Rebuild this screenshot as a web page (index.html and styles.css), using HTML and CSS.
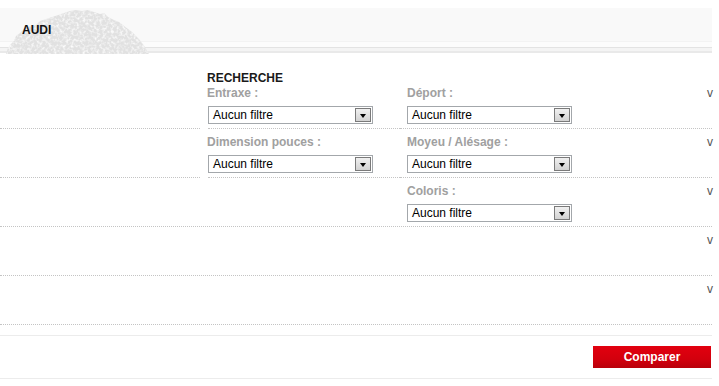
FILE: index.html
```html
<!DOCTYPE html>
<html lang="fr">
<head>
<meta charset="utf-8">
<title>AUDI</title>
<link rel="stylesheet" href="styles.css">
</head>
<body>
<div class="page">
  <div class="header">
    <svg class="cloud" width="160" height="46" viewBox="0 0 160 46" aria-hidden="true">
      <defs>
        <clipPath id="cloudShape">
          <path d="M6 46 L8 40 L11 36 L14 33 L16 28 L20 25 L24 21 L30 18 L36 17 L40 13 L46 11 L52 9 L58 7 L64 5 L70 3 L76 2 L82 3 L88 2 L94 4 L100 6 L104 5 L108 9 L114 12 L119 14 L124 18 L128 21 L132 24 L136 28 L139 31 L142 35 L145 39 L147 43 L149 46 Z"/>
        </clipPath>
        <filter id="speckle" x="0" y="0" width="100%" height="100%">
          <feTurbulence type="fractalNoise" baseFrequency="0.35" numOctaves="2" seed="7"/>
          <feColorMatrix type="matrix" values="0 0 0 0 1  0 0 0 0 1  0 0 0 0 1  2.2 0 0 0 -0.95"/>
        </filter>
      </defs>
      <g clip-path="url(#cloudShape)">
        <rect x="0" y="0" width="160" height="46" fill="#e1e1e1"/>
        <rect x="0" y="0" width="160" height="46" filter="url(#speckle)"/>
      </g>
    </svg>
    <h1 class="title">AUDI</h1>
  </div>

  <div class="table">
    <div class="lead">
      <div class="lead-left"></div>
      <div class="lead-mid">RECHERCHE</div>
    </div>

    <div class="row first">
      <div class="c-left dotted"></div>
      <div class="c-mid dotted">
        <div class="label">Entraxe :</div>
        <div class="select"><span class="txt">Aucun filtre</span><span class="btn"><span class="tri"></span></span></div>
      </div>
      <div class="c-right dotted">
        <div class="field">
          <div class="label">Déport :</div>
          <div class="select"><span class="txt">Aucun filtre</span><span class="btn"><span class="tri"></span></span></div>
        </div>
        <span class="v">v</span>
      </div>
    </div>

    <div class="row">
      <div class="c-left dotted"></div>
      <div class="c-mid dotted">
        <div class="label">Dimension pouces :</div>
        <div class="select"><span class="txt">Aucun filtre</span><span class="btn"><span class="tri"></span></span></div>
      </div>
      <div class="c-right dotted">
        <div class="field">
          <div class="label">Moyeu / Alésage :</div>
          <div class="select"><span class="txt">Aucun filtre</span><span class="btn"><span class="tri"></span></span></div>
        </div>
        <span class="v">v</span>
      </div>
    </div>

    <div class="row full">
      <div class="c-left"></div>
      <div class="c-mid"></div>
      <div class="c-right">
        <div class="field">
          <div class="label">Coloris :</div>
          <div class="select"><span class="txt">Aucun filtre</span><span class="btn"><span class="tri"></span></span></div>
        </div>
        <span class="v">v</span>
      </div>
    </div>

    <div class="row full">
      <div class="c-grow"></div>
      <span class="v">v</span>
    </div>

    <div class="row full">
      <div class="c-grow"></div>
      <span class="v">v</span>
    </div>
  </div>

  <div class="footer">
    <button class="compare" type="button">Comparer</button>
  </div>
</div>
</body>
</html>
```

FILE: styles.css
```css
html, body {
  margin: 0;
  padding: 0;
  background: #ffffff;
}

body {
  font-family: "Liberation Sans", Arial, sans-serif;
  font-size: 12px;
  color: #000;
}

.page {
  width: 712px;
}

/* ---------- header ---------- */
.header {
  position: relative;
  margin-top: 8px;
  height: 46px;
  background: linear-gradient(to bottom,
    #f9f9f9 0px, #f9f9f9 33px,
    #f3f3f3 33px, #f3f3f3 34px,
    #fcfcfc 34px, #fcfcfc 39px,
    #e3e3e3 39px, #e3e3e3 40px,
    #f4f4f4 40px, #f4f4f4 43px,
    #e9e9e9 43px, #e9e9e9 45px,
    #ffffff 45px);
}

.cloud {
  position: absolute;
  left: 0;
  top: 0;
}

.title {
  position: relative;
  margin: 0;
  padding: 15px 0 0 22px;
  font-size: 12px;
  line-height: 14px;
  font-weight: bold;
  color: #111;
}

/* ---------- table ---------- */
.table {
  display: flex;
  flex-direction: column;
}

.lead {
  display: flex;
  align-items: flex-end;
  height: 30px;
}

.lead-left {
  width: 207px;
}

.lead-mid {
  font-weight: bold;
  font-size: 12px;
  line-height: 14px;
  color: #1a1a1a;
  position: relative;
  top: 1px;
}

.row {
  display: flex;
  height: 49px;
  box-sizing: border-box;
}

.row.first {
  height: 45px;
}

.row.full {
  border-bottom: 1px dotted #c4c4c4;
}

.dotted {
  border-bottom: 1px dotted #c4c4c4;
}

.c-left {
  width: 200px;
  box-sizing: border-box;
}

.c-mid {
  width: 192px;
  margin-left: 8px;
  box-sizing: border-box;
  padding-top: 6px;
}

.row.first .c-mid,
.row.first .c-right {
  padding-top: 2px;
}

.c-right {
  flex: 1;
  display: flex;
  justify-content: space-between;
  box-sizing: border-box;
  padding-top: 6px;
  padding-left: 7px;
}

.c-grow {
  flex: 1;
}

.row.full > .v {
  padding-top: 6px;
}

.label {
  font-weight: bold;
  font-size: 12px;
  line-height: 14px;
  color: #a0a0a0;
  margin-bottom: 6px;
}

.c-mid .label {
  margin-left: -1px;
}

.v {
  width: 12px;
  font-size: 12px;
  line-height: 14px;
  color: #555;
  margin-right: -7px;
}

/* ---------- faux select ---------- */
.select {
  display: flex;
  align-items: center;
  width: 165px;
  height: 18px;
  box-sizing: border-box;
  border: 1px solid #a3a7ab;
  background: #fff;
  padding-left: 4px;
  font-size: 12px;
  color: #000;
}

.select .txt {
  flex: 1;
  line-height: 14px;
}

.select .btn {
  display: flex;
  align-items: center;
  justify-content: center;
  width: 16px;
  height: 14px;
  box-sizing: border-box;
  margin-right: 1px;
  border: 1px solid #7a7a7a;
  background: linear-gradient(to bottom, #f0f0f0, #d2d2d2);
}

.select .tri {
  width: 0;
  height: 0;
  border-left: 3.5px solid transparent;
  border-right: 3.5px solid transparent;
  border-top: 4px solid #000;
  margin-top: 1px;
}

/* ---------- footer ---------- */
.footer {
  display: flex;
  justify-content: flex-end;
  margin-top: 10px;
  border-top: 1px solid #ececec;
  border-bottom: 1px solid #ececec;
  padding: 10px 1px 10px 0;
}

.compare {
  width: 118px;
  height: 22px;
  border: 0;
  padding: 0;
  background: linear-gradient(to bottom, #e2000f 0%, #d3000d 60%, #b9000a 100%);
  color: #fff;
  font-family: "Liberation Sans", Arial, sans-serif;
  font-size: 12px;
  font-weight: bold;
  line-height: 22px;
  text-align: center;
}
```
